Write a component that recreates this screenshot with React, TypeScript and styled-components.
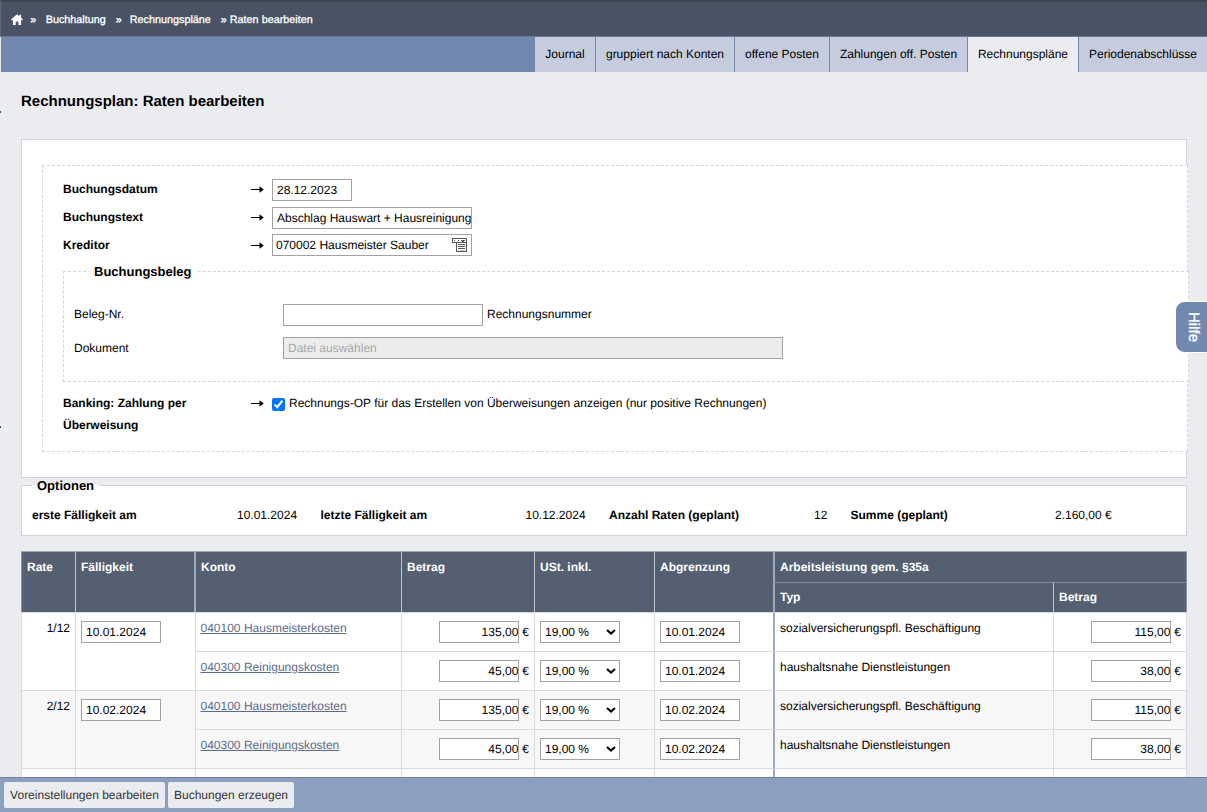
import React from "react";
import styled, { createGlobalStyle } from "styled-components";

const GlobalStyle = createGlobalStyle`
  * {
    box-sizing: border-box;
  }
  body {
    margin: 0;
    background: #ebecf0;
    color: #000;
    font-family: "Liberation Sans", Arial, sans-serif;
    font-size: 12px;
    line-height: 16px;
    text-rendering: geometricPrecision;
  }
  input {
    font-family: inherit;
    font-size: 12px;
    text-rendering: geometricPrecision;
  }
`;

const tabs = [
  { label: "Journal", width: 60 },
  { label: "gruppiert nach Konten", width: 138 },
  { label: "offene Posten", width: 94 },
  { label: "Zahlungen off. Posten", width: 137 },
  { label: "Rechnungspläne", width: 110, active: true },
  { label: "Periodenabschlüsse", width: 128 },
];

const summary = [
  { label: "erste Fälligkeit am", value: "10.01.2024", labelWidth: 205, valueWidth: 83.5 },
  { label: "letzte Fälligkeit am", value: "10.12.2024", labelWidth: 205, valueWidth: 83.5 },
  { label: "Anzahl Raten (geplant)", value: "12", labelWidth: 205, valueWidth: 36.5 },
  { label: "Summe (geplant)", value: "2.160,00 €", labelWidth: 204.5, valueWidth: 80 },
];

const positions = [
  { konto: "040100 Hausmeisterkosten", betrag: "135,00", typ: "sozialversicherungspfl. Beschäftigung", anteil: "115,00" },
  { konto: "040300 Reinigungskosten", betrag: "45,00", typ: "haushaltsnahe Dienstleistungen", anteil: "38,00" },
];

const rates = [
  { nr: "1/12", date: "10.01.2024" },
  { nr: "2/12", date: "10.02.2024" },
];

const Arrow = () => (
  <ArrowIcon viewBox="0 0 13 9">
    <path d="M0 4h9v1H0zM8.500 1.300L12.800 4.500 8.500 7.700z" fill="#000" />
  </ArrowIcon>
);

const ListIcon = () => (
  <svg width="16" height="15" viewBox="0 0 16 15" shapeRendering="crispEdges" fill="#555">
    <path d="M0 0h15v1H0zM0 0h1v5H0zM0 4h15v1H0zM14 0h1v14h-1zM4 4h1v10H4zM4 13h11v1H4zM2 2h1v1H2zM6 2h1v1H6zM9 2h4v1H9zM10 3h2v1h-2zM6 6h7v1H6zM6 8h7v1H6zM6 10h7v1H6z" />
    <path d="M6 12h7v1H6z" opacity="0.3" />
  </svg>
);

const TaxSelect = () => (
  <SelectBox>
    19,00 %
    <svg width="10" height="6" viewBox="0 0 10 6">
      <path d="M1 1l4 3.6L9 1" fill="none" stroke="#000" strokeWidth="2" />
    </svg>
  </SelectBox>
);

const App = () => {
  return (
    <Page>
      <GlobalStyle />
      <Breadcrumb>
        <HomeIcon viewBox="0 0 12 11">
          <path d="M6 0.200l2.300 2V.8h1.800v3l1.900 1.700-.7.900-1.200-.9V11H7.300V7.500H4.700V11H1.900V5.500l-1.200.9L0 5.500z" />
        </HomeIcon>
        <Crumb $gap={7.5}>»</Crumb>
        <Crumb $gap={9.5}>Buchhaltung</Crumb>
        <Crumb $gap={10}>»</Crumb>
        <Crumb $gap={8}>Rechnungspläne</Crumb>
        <Crumb $gap={10}>» Raten bearbeiten</Crumb>
      </Breadcrumb>
      <TabBar>
        {tabs.map((tab) => (
          <Tab key={tab.label} $width={tab.width} $active={tab.active}>
            {tab.label}
          </Tab>
        ))}
      </TabBar>

      <Main>
        <Title>Rechnungsplan: Raten bearbeiten</Title>

        <Panel>
          <DashedGroup>
            <FormRow>
              <Label>Buchungsdatum</Label>
              <Arrow />
              <Input $width={80} defaultValue="28.12.2023" />
            </FormRow>
            <FormRow>
              <Label>Buchungstext</Label>
              <Arrow />
              <Input $width={200} $flush defaultValue="Abschlag Hauswart + Hausreinigung" />
            </FormRow>
            <FormRow>
              <Label>Kreditor</Label>
              <Arrow />
              <Picker>
                070002 Hausmeister Sauber
                <ListIcon />
              </Picker>
            </FormRow>

            <Receipt>
              <ReceiptLegend>Buchungsbeleg</ReceiptLegend>
              <ReceiptRow>
                <ReceiptLabel>Beleg-Nr.</ReceiptLabel>
                <Input $width={200} />
                <Hint>Rechnungsnummer</Hint>
              </ReceiptRow>
              <ReceiptRow>
                <ReceiptLabel $low>Dokument</ReceiptLabel>
                <Input $width={500} placeholder="Datei auswählen" disabled />
              </ReceiptRow>
            </Receipt>

            <BankingRow>
              <Label>Banking: Zahlung per Überweisung</Label>
              <Arrow />
              <Check type="checkbox" defaultChecked />
              <span>Rechnungs-OP für das Erstellen von Überweisungen anzeigen (nur positive Rechnungen)</span>
            </BankingRow>
          </DashedGroup>
        </Panel>

        <Options>
          <OptionsLegend>Optionen</OptionsLegend>
          <OptionsRow>
            {summary.map((item) => (
              <React.Fragment key={item.label}>
                <OptionLabel $width={item.labelWidth}>{item.label}</OptionLabel>
                <OptionValue $width={item.valueWidth}>{item.value}</OptionValue>
              </React.Fragment>
            ))}
          </OptionsRow>
        </Options>

        <Table>
          <colgroup>
            <Col $width={54} />
            <Col $width={120} />
            <Col $width={206} />
            <Col $width={133} />
            <Col $width={120} />
            <Col $width={119} />
            <Col $width={280} />
            <Col $width={134} />
          </colgroup>
          <thead>
            <HeadRow>
              <Th rowSpan={2} $edge>Rate</Th>
              <Th rowSpan={2} $thickRight>Fälligkeit</Th>
              <Th rowSpan={2} $thick>Konto</Th>
              <Th rowSpan={2}>Betrag</Th>
              <Th rowSpan={2}>USt. inkl.</Th>
              <Th rowSpan={2}>Abgrenzung</Th>
              <Th colSpan={2} $divider $last>Arbeitsleistung gem. §35a</Th>
            </HeadRow>
            <HeadRow>
              <Th $divider $sub>Typ</Th>
              <Th $sub $last>Betrag</Th>
            </HeadRow>
          </thead>
          <tbody>
            {rates.map((rate, r) =>
              positions.map((pos, p) => (
                <Row key={rate.nr + pos.konto} $odd={r % 2 === 1}>
                  {p === 0 && (
                    <>
                      <Td rowSpan={2} $right $edge>{rate.nr}</Td>
                      <Td rowSpan={2}>
                        <Input $width={80} defaultValue={rate.date} />
                      </Td>
                    </>
                  )}
                  <Td>
                    <Account>{pos.konto}</Account>
                  </Td>
                  <Td $right>
                    <Amount>
                      <Input $width={80} $right defaultValue={pos.betrag} />€
                    </Amount>
                  </Td>
                  <Td>
                    <TaxSelect />
                  </Td>
                  <Td>
                    <Input $width={80} defaultValue={rate.date} />
                  </Td>
                  <Td $divider>{pos.typ}</Td>
                  <Td $right $last>
                    <Amount>
                      <Input $width={80} $right defaultValue={pos.anteil} />€
                    </Amount>
                  </Td>
                </Row>
              ))
            )}
            <Row $odd={false}>
              <Td />
              <Td />
              <Td />
              <Td />
              <Td />
              <Td />
              <Td $divider />
              <Td $last />
            </Row>
          </tbody>
        </Table>
      </Main>

      <Footer>
        <FooterButton $width={161}>Voreinstellungen bearbeiten</FooterButton>
        <FooterButton $width={126}>Buchungen erzeugen</FooterButton>
      </Footer>
      <HelpTab>Hilfe</HelpTab>
      <EdgeMark $top={111} />
      <EdgeMark $top={426} />
    </Page>
  );
};

export default App;

const Page = styled.div`
  position: relative;
  display: flex;
  flex-direction: column;
  width: 1207px;
  height: 812px;
  overflow: hidden;
`;

const Breadcrumb = styled.nav`
  display: flex;
  align-items: center;
  flex: none;
  height: 37px;
  padding: 1px 0 0 9.7px;
  border-top: 2px solid #3f4852;
  border-bottom: 1px solid #68779a;
  border-left: 1px solid #5f6877;
  background: #4a5364;
  color: #fff;
  font-size: 10.8px;
`;

const HomeIcon = styled.svg`
  width: 12px;
  height: 11px;
  margin-bottom: 1px;
  fill: #fff;
`;

const Crumb = styled.span<{ $gap: number }>`
  margin-left: ${(props) => props.$gap}px;
  -webkit-text-stroke: 0.3px #fff;
`;

const TabBar = styled.div`
  display: flex;
  justify-content: flex-end;
  gap: 1px;
  flex: none;
  height: 35px;
  border-left: 1px solid #e4e6ec;
  background: #7388af;
`;

const Tab = styled.a<{ $width: number; $active?: boolean }>`
  width: ${(props) => props.$width}px;
  padding-top: 9px;
  text-align: center;
  white-space: nowrap;
  background: ${(props) => (props.$active ? "#ebecf0" : "#c4ccde")};
`;

const Main = styled.main`
  flex: 1;
  min-height: 0;
  overflow: hidden;
  padding: 21px 20px 0 21px;
`;

const Title = styled.h1`
  margin: 0 0 28px;
  font-size: 15px;
  line-height: 18px;
  font-weight: bold;
`;

const Panel = styled.section`
  width: 1166px;
  height: 339px;
  padding: 25px 0 0 20px;
  border: 1px solid #d0d3dc;
  background: #fff;
`;

const DashedGroup = styled.div`
  width: 1146px;
  height: 287px;
  padding: 13px 0 0 20px;
  border: 1px dashed #d3d5da;
  background: #fff;
`;

const FormRow = styled.div`
  display: flex;
  align-items: flex-start;
  height: 28px;
`;

const Label = styled.label`
  width: 188px;
  padding-right: 50px;
  font-weight: bold;
  line-height: 22px;
  margin-top: -1px;
`;

const ArrowIcon = styled.svg`
  width: 13px;
  height: 9px;
  margin: 6px 8px 0 0;
`;

const Input = styled.input<{ $width: number; $right?: boolean; $flush?: boolean }>`
  display: block;
  width: ${(props) => props.$width}px;
  height: 22px;
  padding: 0 ${(props) => (props.$right || props.$flush ? 0 : 4)}px 0 4px;
  border: 1px solid #a2a2a2;
  border-radius: 0;
  background: #fff;
  color: #000;
  text-align: ${(props) => (props.$right ? "right" : "left")};

  &:disabled {
    background: #ececec;
  }
  &::placeholder {
    color: #a9a9a9;
  }
`;

const Picker = styled.div`
  display: flex;
  align-items: center;
  justify-content: space-between;
  width: 200px;
  height: 22px;
  margin-top: -1px;
  padding: 0 3px;
  border: 1px solid #a2a2a2;
`;

const Receipt = styled.fieldset`
  width: 1126px;
  height: 119px;
  margin: 0;
  padding: 24px 0 0 10px;
  border: 1px dashed #d3d5da;
  background: #fff;
`;

const ReceiptLegend = styled.legend`
  margin-left: 15px;
  padding: 0 6px 0 5px;
  font-size: 13px;
  font-weight: bold;
  line-height: 17px;
`;

const ReceiptRow = styled.div`
  display: flex;
  align-items: flex-start;
  height: 33px;
`;

const ReceiptLabel = styled.label<{ $low?: boolean }>`
  width: 209px;
  padding-top: ${(props) => (props.$low ? 3 : 2)}px;
`;

const Hint = styled.span`
  margin-left: 4px;
  padding-top: 2px;
`;

const BankingRow = styled.div`
  display: flex;
  align-items: flex-start;
  margin-top: 11px;

  > span {
    margin-top: 2px;
  }
`;

const Check = styled.input`
  width: 13px;
  height: 13px;
  margin: 5px 4px 0 0;
`;

const Options = styled.fieldset`
  width: 1166px;
  height: 59px;
  margin: -1px 0 0;
  padding: 13px 10px 0;
  border: 1px solid #d0d3dc;
  background: #fff;
`;

const OptionsLegend = styled.legend`
  padding: 0 5px;
  font-size: 13px;
  font-weight: bold;
  line-height: 17px;
`;

const OptionsRow = styled.div`
  display: flex;
`;

const OptionLabel = styled.strong<{ $width: number }>`
  width: ${(props) => props.$width}px;
`;

const OptionValue = styled.span<{ $width: number }>`
  width: ${(props) => props.$width}px;
`;

const Table = styled.table`
  width: 1166px;
  margin-top: 15px;
  table-layout: fixed;
  border-collapse: separate;
  border-spacing: 0;
  background: #fff;
`;

const Col = styled.col<{ $width: number }>`
  width: ${(props) => props.$width}px;
`;

const HeadRow = styled.tr`
  height: 30.5px;
`;

const Th = styled.th<{
  $thick?: boolean;
  $thickRight?: boolean;
  $divider?: boolean;
  $sub?: boolean;
  $edge?: boolean;
  $last?: boolean;
}>`
  padding: ${(props) => (props.$sub ? 6 : 7)}px 5px 0;
  border-top: 1px solid ${(props) => (props.$sub ? "#7d899c" : "#a3a9b2")};
  border-left: ${(props) => (props.$divider ? 2 : 1)}px solid
    ${(props) => (props.$thick || props.$divider ? "#9dabc0" : props.$edge ? "#8d95a3" : "#c4c6ca")};
  border-right: ${(props) => (props.$thickRight ? "1px solid #9dabc0" : props.$last ? "1px solid #8d95a3" : "none")};
  background: #545f72;
  color: #fff;
  text-align: left;
  vertical-align: top;
`;

const Row = styled.tr<{ $odd: boolean }>`
  height: 39px;
  background: ${(props) => (props.$odd ? "#f7f7f7" : "#fff")};
`;

const Td = styled.td<{ $right?: boolean; $divider?: boolean; $edge?: boolean; $last?: boolean }>`
  padding: ${(props) => (props.$divider || props.$edge ? 7 : 8)}px 5px 0;
  border-top: 1px solid #dcdcdc;
  border-left: ${(props) => (props.$divider ? "2px solid #9dabc0" : "1px solid #dcdcdc")};
  border-right: ${(props) => (props.$last ? "1px solid #dcdcdc" : "none")};
  text-align: ${(props) => (props.$right ? "right" : "left")};
  vertical-align: top;
`;

const Account = styled.a`
  display: block;
  margin: -1px 0 0 -0.5px;
  color: #5c6c8c;
  text-decoration: underline;
`;

const Amount = styled.div`
  display: flex;
  align-items: center;
  justify-content: flex-end;
  gap: 3px;
`;

const SelectBox = styled.div`
  display: flex;
  align-items: center;
  justify-content: space-between;
  width: 80px;
  height: 22px;
  padding: 0 3px 0 4px;
  border: 1px solid #a2a2a2;
  background: #fff;
`;

const Footer = styled.footer`
  display: flex;
  gap: 3px;
  flex: none;
  height: 35px;
  padding: 4px 0 0 4px;
  border-top: 1px solid #727f94;
  background: #8c9fc1;
`;

const FooterButton = styled.button<{ $width: number }>`
  width: ${(props) => props.$width}px;
  height: 26px;
  padding: 0;
  border: none;
  border-radius: 2px;
  background: #ebecf0;
  color: #333;
  font-family: inherit;
  font-size: 12px;
  text-rendering: geometricPrecision;
`;

const HelpTab = styled.div`
  position: absolute;
  top: 301px;
  right: 0;
  display: flex;
  align-items: center;
  justify-content: center;
  width: 31px;
  height: 52px;
  padding-left: 3px;
  border: solid #fff;
  border-width: 1px 0;
  border-radius: 9px 0 0 9px;
  background: #7388af;
  color: #fff;
  font-size: 15px;
  -webkit-text-stroke: 0.3px #fff;
  writing-mode: vertical-rl;
`;

const EdgeMark = styled.div<{ $top: number }>`
  position: absolute;
  top: ${(props) => props.$top}px;
  left: 0;
  width: 1px;
  height: 2px;
  background: #4a5364;
`;
